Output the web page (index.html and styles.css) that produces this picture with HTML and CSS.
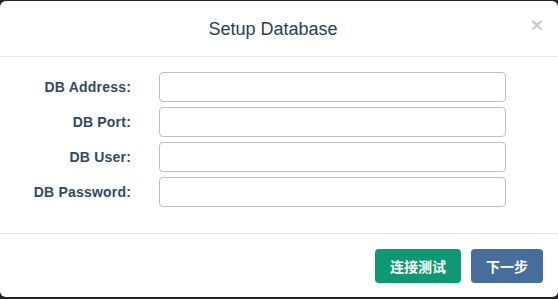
FILE: index.html
```html
<!DOCTYPE html>
<html lang="en">
<head>
    <meta charset="UTF-8">
    <meta name="viewport" content="width=device-width, initial-scale=1.0">
    <title>Setup Database</title>
    <link rel="stylesheet" href="styles.css">
</head>
<body>
    <div class="modal">
        <div class="modal-header">
            <h4 class="modal-title">Setup Database</h4>
            <button class="close" type="button">&times;</button>
        </div>

        <form class="modal-body">
            <div class="form-row">
                <label for="db-address">DB Address:</label>
                <input id="db-address" type="text">
            </div>
            <div class="form-row">
                <label for="db-port">DB Port:</label>
                <input id="db-port" type="text">
            </div>
            <div class="form-row">
                <label for="db-user">DB User:</label>
                <input id="db-user" type="text">
            </div>
            <div class="form-row">
                <label for="db-password">DB Password:</label>
                <input id="db-password" type="password">
            </div>
        </form>

        <div class="modal-footer">
            <button class="btn btn-success" type="button">连接测试</button>
            <button class="btn btn-primary" type="button">下一步</button>
        </div>
    </div>
</body>
</html>
```

FILE: styles.css
```css
* {
    margin: 0;
    padding: 0;
    box-sizing: border-box;
}

body {
    font-family: "Liberation Sans", Arial, "Noto Sans CJK SC", sans-serif;
    background: #262626;
    color: #34495e;
    padding: 1px 0 2px;
    height: 100vh;
}

.modal {
    background: #fff;
    border-radius: 6px;
    height: 296px;
    display: flex;
    flex-direction: column;
}

.modal-header {
    position: relative;
    height: 56px;
    padding: 1px 12px 0 0;
    border-bottom: 1px solid #e5e5e5;
    display: flex;
    align-items: center;
    justify-content: center;
}

.modal-title {
    font-size: 18px;
    font-weight: normal;
    color: #2c3e50;
}

.close {
    position: absolute;
    top: 13px;
    right: 15px;
    background: none;
    border: none;
    font-family: "Liberation Sans", Arial, sans-serif;
    font-size: 21px;
    font-weight: bold;
    color: #000;
    opacity: 0.2;
    line-height: 1;
}

.modal-body {
    padding: 15px 52px 26px 0;
    display: flex;
    flex-direction: column;
    gap: 5px;
    border-bottom: 1px solid #e5e5e5;
}

.form-row {
    display: flex;
    align-items: center;
}

.form-row label {
    width: 131px;
    text-align: right;
    font-size: 14px;
    font-weight: bold;
    letter-spacing: 0.2px;
    color: #34495e;
    margin-right: 28px;
}

.form-row input {
    flex: 1;
    height: 30px;
    border: 1px solid #bdbdbd;
    border-radius: 4px;
    padding: 5px 10px;
    font-size: 14px;
}

.modal-footer {
    display: flex;
    justify-content: flex-end;
    gap: 10px;
    padding: 15px 15px 0;
}

.btn {
    height: 34px;
    padding: 0 15px;
    border: none;
    border-radius: 4px;
    color: #fff;
    font-family: "Liberation Sans", "Noto Sans CJK SC", sans-serif;
    font-size: 14px;
    font-weight: bold;
}

.btn-success {
    background: #0f9873;
}

.btn-primary {
    background: #466d9b;
}
```
